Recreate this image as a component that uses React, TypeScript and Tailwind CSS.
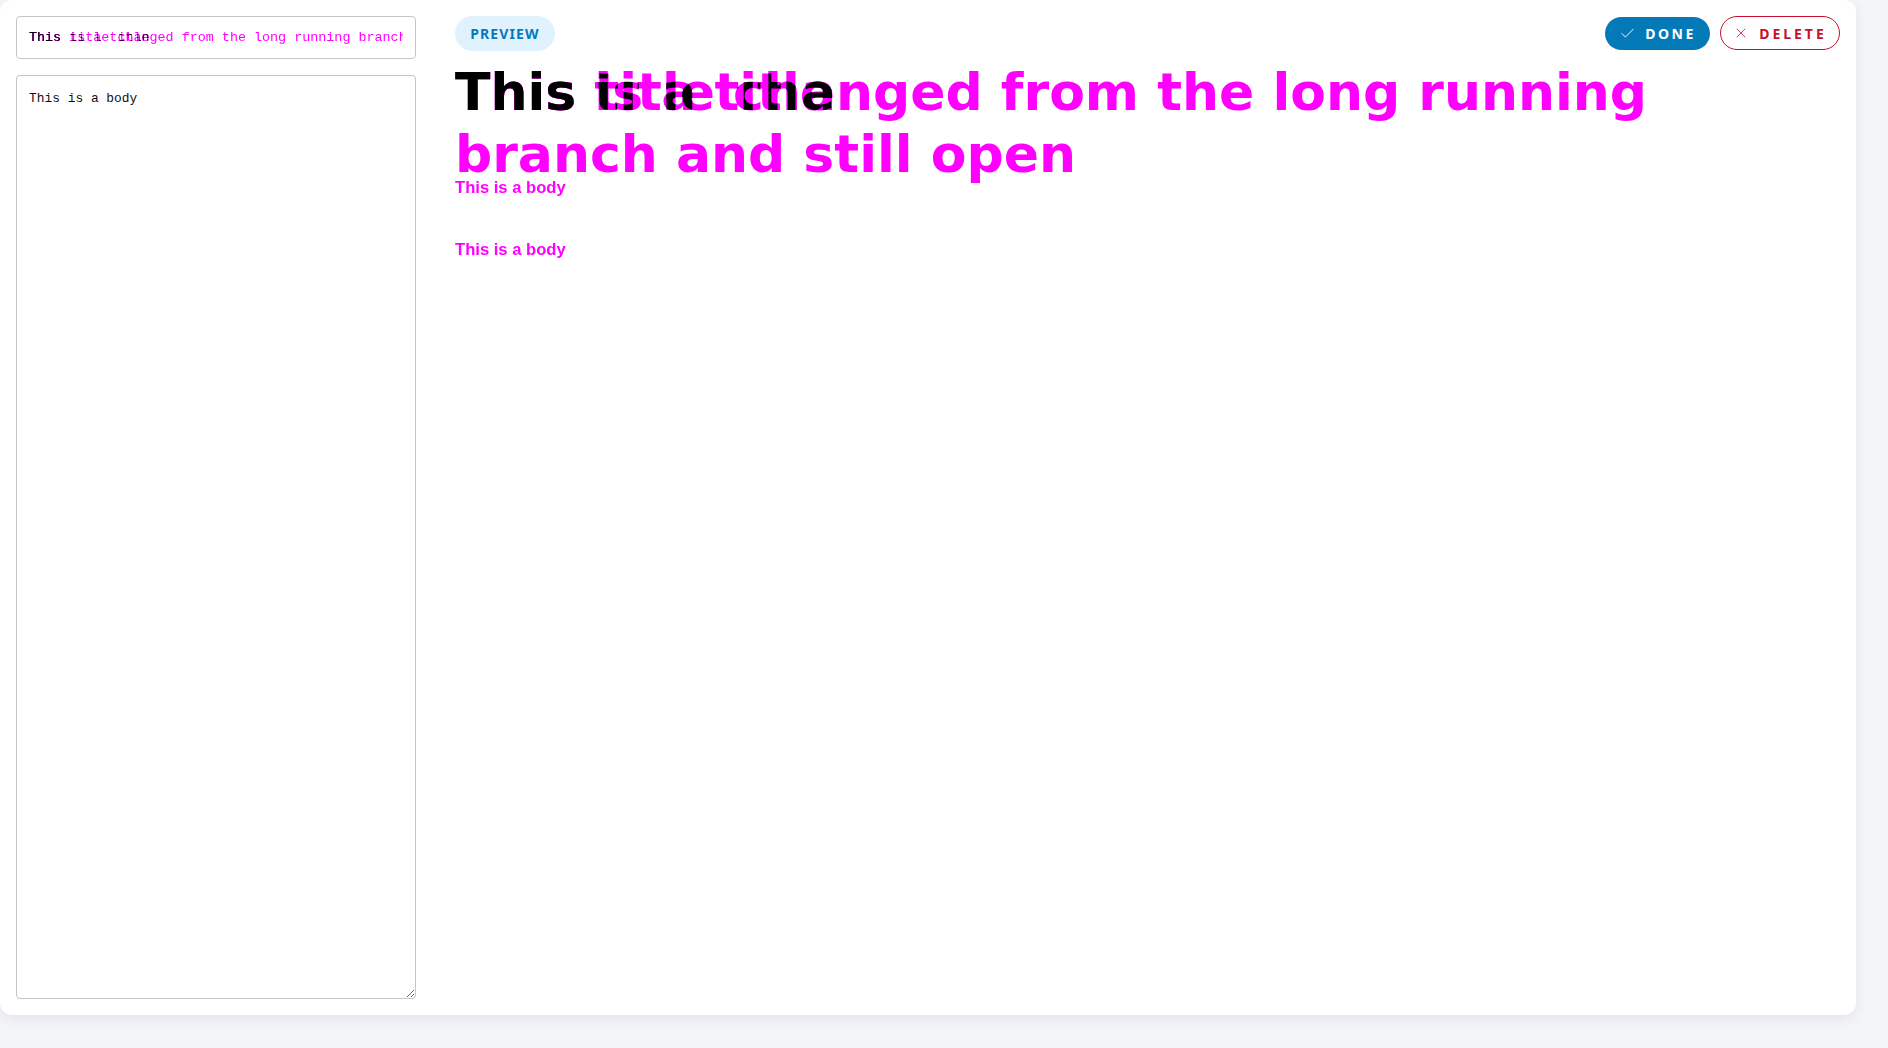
import React from "react";
import { Check, X } from "lucide-react";

const TITLE_A = "This is a title";
const TITLE_B = "This title changed from the long running branch and still open";

type LayerFn = (cls: string) => React.ReactNode;

function Xor({ a, b, className }: { a: LayerFn; b: LayerFn; className: string }) {
  return (
    <div className={"relative isolate " + className}>
      <div className="absolute inset-0 text-[#ff00ff]">{a("")}</div>
      <div className="absolute inset-0 text-[#ff00ff]">{b("")}</div>
      <div className="absolute inset-0 isolate overflow-hidden mix-blend-multiply">
        <div className="absolute inset-0 bg-white text-black">{a("")}</div>
        <div className="absolute inset-0 bg-white text-black mix-blend-lighten">{b("")}</div>
      </div>
    </div>
  );
}

function PreviewLayer(title: string) {
  return () => (
    <div className="flex flex-col">
      <h1 className="font-['DejaVu_Sans',sans-serif] text-[52px] font-bold leading-[62px]">
        {title}
      </h1>
      <p className="mt-[53px] font-['Liberation_Sans',Arial,sans-serif] text-[16.6px] font-bold leading-6">
        This is a body
      </p>
    </div>
  );
}

function InputLayer(title: string) {
  return () => (
    <div className="whitespace-nowrap font-['Liberation_Mono',monospace] text-[13.4px] leading-[41px]">
      {title}
    </div>
  );
}

export default function App() {
  return (
    <div className="min-h-screen w-full bg-[#f4f5f8]">
      <div className="flex h-[1015px] w-[1856px] rounded-xl bg-white shadow-[0_4px_14px_rgba(0,0,0,0.07)]">
        {/* Left editor column */}
        <div className="flex w-[416px] shrink-0 flex-col gap-4 py-4 pl-4">
          <div className="h-[43px] w-[400px] rounded-[4px] border border-[#c4c4c9] bg-white px-3">
            <Xor
              className="h-[41px] overflow-hidden"
              a={InputLayer(TITLE_A)}
              b={InputLayer(TITLE_B)}
            />
          </div>
          <textarea
            readOnly
            value="This is a body"
            className="w-[400px] flex-1 resize-y rounded-[4px] border border-[#c4c4c9] bg-white px-3 pt-[15px] font-['Liberation_Mono',monospace] text-[12.9px] leading-[15px] text-[#111] outline-none"
          />
        </div>

        {/* Right preview column */}
        <div className="flex min-w-0 flex-1 flex-col pb-4 pl-[39px] pr-4 pt-4">
          <div className="flex items-start justify-between">
            <span className="flex h-[35px] w-[100px] items-center justify-center rounded-full bg-[#e0f2fe] font-['Noto_Sans',sans-serif] text-[14px] font-bold tracking-[0.08em] text-[#0479bb]">
              PREVIEW
            </span>
            <div className="flex items-center gap-[10px]">
              <button className="flex h-[33px] w-[105px] items-center justify-center gap-[9px] rounded-full bg-[#0479b8] font-['Noto_Sans',sans-serif] text-[14px] font-bold tracking-[0.18em] text-white">
                <Check size={17} strokeWidth={1.3} />
                <span>DONE</span>
              </button>
              <button className="flex h-[34px] w-[120px] items-center justify-center gap-[10px] rounded-full border border-[#c8102e] bg-white font-['Noto_Sans',sans-serif] text-[14px] font-bold tracking-[0.21em] text-[#c8102e]">
                <X size={16} strokeWidth={1.2} />
                <span>DELETE</span>
              </button>
            </div>
          </div>
          <Xor className="mt-[10px] flex-1" a={PreviewLayer(TITLE_A)} b={PreviewLayer(TITLE_B)} />
        </div>
      </div>
    </div>
  );
}
